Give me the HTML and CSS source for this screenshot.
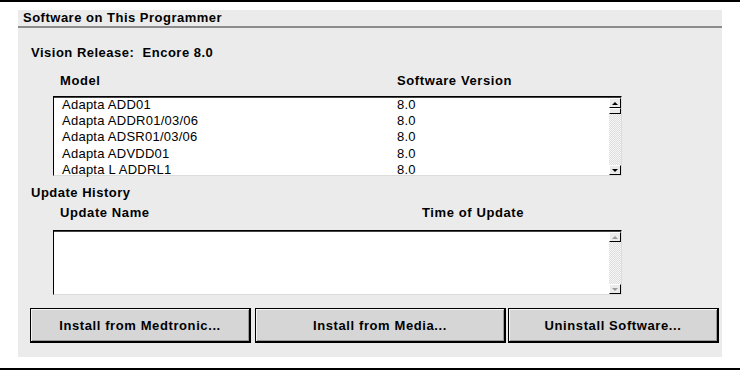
FILE: index.html
```html
<!DOCTYPE html>
<html>
<head>
    <title>Software on This Programmer</title>
    <meta charset="utf-8">
    <link rel="stylesheet" href="styles.css">
</head>
<body>
    <div class="page">
        <div class="panel">
            <div class="panel-title">Software on This Programmer</div>

            <div class="release">Vision Release:&nbsp; Encore 8.0</div>

            <div class="col-head">
                <span class="col-first">Model</span>
                <span>Software Version</span>
            </div>
            <div class="listbox models">
                <div class="rows">
                    <div class="row"><span class="col-first">Adapta ADD01</span><span>8.0</span></div>
                    <div class="row"><span class="col-first">Adapta ADDR01/03/06</span><span>8.0</span></div>
                    <div class="row"><span class="col-first">Adapta ADSR01/03/06</span><span>8.0</span></div>
                    <div class="row"><span class="col-first">Adapta ADVDD01</span><span>8.0</span></div>
                    <div class="row"><span class="col-first">Adapta L ADDRL1</span><span>8.0</span></div>
                </div>
                <div class="scrollbar">
                    <div class="sb-btn"><span class="arrow up"></span></div>
                    <div class="sb-thumb"></div>
                    <div class="sb-track"></div>
                    <div class="sb-btn"><span class="arrow down"></span></div>
                </div>
            </div>

            <div class="section">Update History</div>
            <div class="col-head">
                <span class="col-name">Update Name</span>
                <span>Time of Update</span>
            </div>
            <div class="listbox history">
                <div class="rows"></div>
                <div class="scrollbar disabled">
                    <div class="sb-btn"><span class="arrow up"></span></div>
                    <div class="sb-track"></div>
                    <div class="sb-btn"><span class="arrow down"></span></div>
                </div>
            </div>

            <div class="actions">
                <button class="btn btn-medtronic">Install from Medtronic...</button>
                <button class="btn btn-media">Install from Media...</button>
                <button class="btn btn-uninstall">Uninstall Software...</button>
            </div>
        </div>
    </div>
</body>
</html>
```

FILE: styles.css
```css
body {
    margin: 0;
    padding: 0;
    background: #fff;
    color: #000;
    font-family: "Liberation Sans", Arial, sans-serif;
    font-size: 13px;
}

.page {
    width: 740px;
    height: 370px;
    box-sizing: border-box;
    border-top: 2px solid #000;
    border-bottom: 2px solid #000;
    padding: 8px 18px 0;
}

.panel {
    width: 704px;
    height: 347px;
    box-sizing: border-box;
    background: #ebebeb;
    display: flex;
    flex-direction: column;
}

.panel-title {
    font-weight: bold;
    letter-spacing: 0.5px;
    height: 16px;
    line-height: 16px;
    padding-left: 5px;
    border-bottom: 2px solid #8c8c8c;
}

.release,
.section {
    font-weight: bold;
    letter-spacing: 0.5px;
    line-height: 16px;
    margin-left: 13px;
}

.release {
    margin-top: 17px;
}

.col-head {
    display: flex;
    font-weight: bold;
    letter-spacing: 0.6px;
    line-height: 16px;
    padding-left: 42px;
}

.release + .col-head {
    margin-top: 12px;
}

.col-first {
    width: 337px;
}

.col-name {
    width: 362px;
}

.listbox {
    display: flex;
    width: 569px;
    box-sizing: border-box;
    margin-left: 35px;
    background: #fff;
    border: 1px solid;
    border-color: #000 #dcdcdc #dcdcdc #000;
    box-shadow: inset 0 1px 0 #444;
}

.models {
    height: 80px;
    margin-top: 7px;
}

.history {
    height: 65px;
    margin-top: 9px;
}

.rows {
    flex: 1;
    padding: 0 0 0 8px;
    letter-spacing: 0.25px;
}

.row {
    display: flex;
    line-height: 16.2px;
}

.row .col-first {
    width: 335px;
}

.scrollbar {
    width: 12px;
    display: flex;
    flex-direction: column;
    margin-top: 1px;
}

.sb-btn {
    height: 10px;
    box-sizing: border-box;
    background: #ebebeb;
    border: 1px solid;
    border-color: #fff #000 #000 #fff;
    display: flex;
    align-items: center;
    justify-content: center;
}

.sb-thumb {
    height: 6px;
    box-sizing: border-box;
    background: #ebebeb;
    border: 1px solid;
    border-color: #fff #000 #000 #fff;
}

.sb-track {
    flex: 1;
    background: repeating-conic-gradient(#f6f6f6 0 25%, #dedede 0 50%) 0 0 / 2px 2px;
}

.arrow {
    width: 0;
    height: 0;
    border-left: 3px solid transparent;
    border-right: 3px solid transparent;
}

.arrow.up {
    border-bottom: 3px solid #000;
}

.arrow.down {
    border-top: 3px solid #000;
}

.disabled .arrow.up {
    border-bottom-color: #9a9a9a;
}

.disabled .arrow.down {
    border-top-color: #9a9a9a;
}

.section {
    margin-top: 9px;
}

.section + .col-head {
    margin-top: 4px;
}

.actions {
    display: flex;
    margin: 13px 0 0 12px;
}

.btn {
    height: 35px;
    padding: 0;
    background: #d6d6d6;
    color: #000;
    font-family: inherit;
    font-size: 13px;
    font-weight: bold;
    letter-spacing: 0.6px;
    border: 1px solid #000;
    border-right-width: 2px;
    border-bottom-width: 2px;
    box-shadow: inset 1px 1px 0 #f4f4f4, inset -1px -1px 0 #9a9a9a;
}

.btn-medtronic {
    width: 221px;
}

.btn-media {
    width: 251px;
    margin-left: 4px;
}

.btn-uninstall {
    width: 211px;
    margin-left: 2px;
}
```
